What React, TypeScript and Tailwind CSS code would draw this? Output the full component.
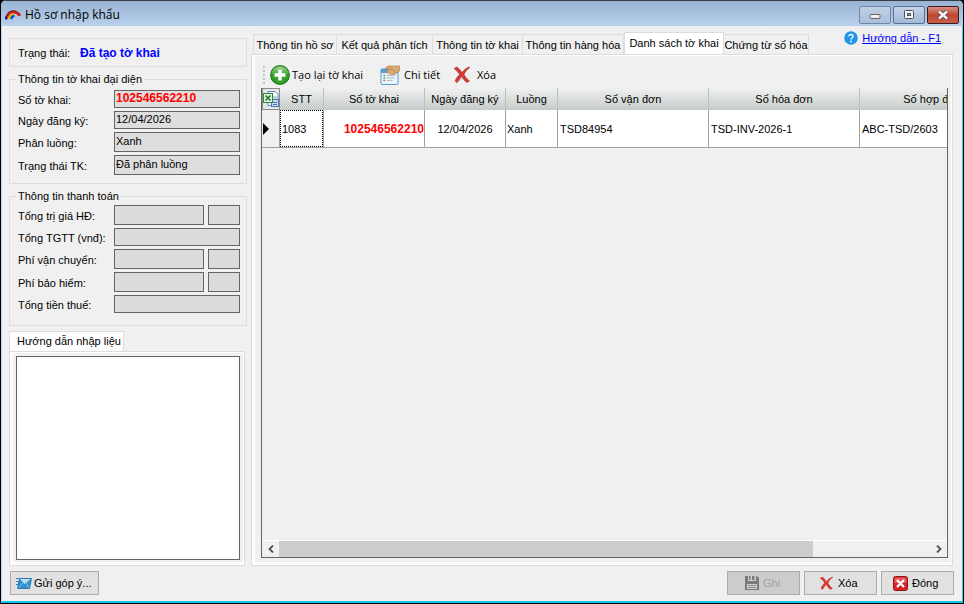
import React from "react";

const tabs = [
  { label: "Thông tin hồ sơ", width: "w-[84px]" },
  { label: "Kết quả phân tích", width: "w-[96px]" },
  { label: "Thông tin tờ khai", width: "w-[90px]" },
  { label: "Thông tin hàng hóa", width: "w-[101px]" },
  { label: "Danh sách tờ khai", width: "w-[100px]", active: true },
  { label: "Chứng từ số hóa", width: "w-[85px]" },
];

const columns = [
  { label: "STT", width: "w-[44px]" },
  { label: "Số tờ khai", width: "w-[101px]" },
  { label: "Ngày đăng ký", width: "w-[81px]" },
  { label: "Luồng", width: "w-[52px]" },
  { label: "Số vận đơn", width: "w-[151px]" },
  { label: "Số hóa đơn", width: "w-[151px]" },
  { label: "Số hợp đồng", width: "w-[151px]" },
];

const declarationFields = [
  { id: "number", label: "Số tờ khai:", value: "102546562210", size: "h-[18px]", style: "text-xs font-bold text-[#ff0000]" },
  { id: "date", label: "Ngày đăng ký:", value: "12/04/2026", size: "h-[18px]", style: "" },
  { id: "channel", label: "Phân luồng:", value: "Xanh", size: "h-5", style: "" },
  { id: "state", label: "Trạng thái TK:", value: "Đã phân luồng", size: "h-5", style: "" },
];

const paymentFields = [
  { id: "value", label: "Tổng trị giá HĐ:", size: "h-5", unit: true },
  { id: "taxable", label: "Tổng TGTT (vnđ):", size: "h-[18px]", unit: false },
  { id: "freight", label: "Phí vận chuyển:", size: "h-5", unit: true },
  { id: "insurance", label: "Phí bảo hiểm:", size: "h-5", unit: true },
  { id: "tax", label: "Tổng tiền thuế:", size: "h-[18px]", unit: false },
];

const LogoIcon = () => (
  <svg width="16" height="10" viewBox="0 0 16 10" fill="none" strokeWidth="1.500">
    <path d="M.8 8.500C2 4 5 1 8.500 1c3.500 0 5 2 7 4.500" stroke="#7a0f1e" />
    <path d="M2 9c1.500-4 4-6.500 7-6.500 2.500 0 4 1.500 5.500 3.500" stroke="#f01818" strokeWidth="2" />
    <path d="M3.700 9c.8-3 2.500-4.500 4.800-5.200" stroke="#ffd800" />
    <path d="M5.200 9c.6-2.500 1.800-3.800 3.800-4" stroke="#17a03a" />
    <path d="M6.500 9c.4-1.800 1.200-2.800 3-3" stroke="#1b2be0" />
    <path d="M1 6.500v3" stroke="#1520b0" strokeWidth="2" />
  </svg>
);

const CrossIcon = () => (
  <svg width="18" height="18" viewBox="0 0 18 18">
    <path d="M3 17.500l4-3 3-3 5 5" stroke="#c9c9c9" strokeWidth="1" fill="none" />
    <path
      d="M1 2.500L4 1c2 1.500 4 4 5 5.500C11 4 13 2 16 1l1 .5c-3 2-5 4.500-6 7 1.500 2.500 3 4.500 5.500 6.500L14 16.500c-2.500-1.500-4-4-5.500-6C7 12.500 6 14.500 4 16.500L2 15c1-2.500 2.500-4.500 4.500-6.500C5 6 3.500 4.500 1 2.500z"
      fill="#d23a33"
      stroke="#a8221c"
      strokeWidth=".5"
    />
  </svg>
);

const SmallCrossIcon = () => (
  <svg width="15" height="15" viewBox="0 0 18 18">
    <path
      d="M1 2.500L4 1c2 1.500 4 4 5 5.500C11 4 13 2 16 1l1 .5c-3 2-5 4.500-6 7 1.500 2.500 3 4.500 5.500 6.500L14 16.500c-2.500-1.500-4-4-5.500-6C7 12.500 6 14.500 4 16.500L2 15c1-2.500 2.500-4.500 4.500-6.500C5 6 3.500 4.500 1 2.500z"
      fill="#d23a33"
    />
  </svg>
);

const AddIcon = () => (
  <svg width="20" height="20" viewBox="0 0 20 20">
    <defs>
      <linearGradient id="add" x1="0" y1="0" x2="0" y2="1">
        <stop offset="0" stopColor="#a5dc98" />
        <stop offset=".5" stopColor="#35a12d" />
        <stop offset="1" stopColor="#2f9b28" />
      </linearGradient>
    </defs>
    <circle cx="10" cy="10" r="9.300" fill="url(#add)" stroke="#1f7a22" strokeWidth="1.200" />
    <path d="M8.200 4.500h3.600v3.700h3.700v3.600h-3.700v3.700H8.200v-3.700H4.500V8.200h3.700z" fill="#fff" />
  </svg>
);

const DetailIcon = () => (
  <svg width="20" height="20" viewBox="0 0 20 20">
    <rect x="1" y="4" width="17" height="15.500" rx="1" fill="#e9f3fa" stroke="#5a9fce" />
    <path d="M1 4h17v4H1z" fill="#4f9fd3" />
    <path d="M3.500 10.500h1.500M3.500 13h1.500" stroke="#35b34a" strokeWidth="1.500" />
    <path d="M3.500 15.500h1.500" stroke="#d65a4a" strokeWidth="1.500" />
    <path d="M6.500 10.500h8M6.500 13h8M6.500 15.500h6" stroke="#b4bec8" />
    <path
      d="M5 3.500L8 1h11.500v5l-3 1.500-2 2.500-1.500-1-1.500 1-1.500-1.500L7 8 6 6.500 9 4.500z"
      fill="#dba873"
      stroke="#a87a4c"
      strokeWidth=".6"
    />
    <path d="M9 4.500l3-.5 3.500 3.500" stroke="#a87a4c" strokeWidth=".7" fill="none" />
  </svg>
);

const ExcelIcon = () => (
  <svg width="16" height="16" viewBox="0 0 16 16">
    <path d="M5 .5h7l3 3v11H5z" fill="#fff" stroke="#5f83b8" />
    <path d="M9 6h5M9 8h5M9 10h5" stroke="#86a6d6" />
    <rect x="8.500" y="8.500" width="7" height="7" fill="#c6dcf5" stroke="#4a74b4" />
    <path d="M10 11.500h4M10 13.500h4" stroke="#4a74b4" />
    <rect x=".5" y="2.500" width="9" height="9" fill="#e4f3e0" stroke="#2b8a35" />
    <path d="M2.500 4.500l5 5M7.500 4.500l-5 5" stroke="#1f7f2b" strokeWidth="1.700" />
  </svg>
);

const MailIcon = () => (
  <svg width="16" height="11" viewBox="0 0 16 11">
    <path d="M3.500.5h12l-2 10h-12z" fill="#2f8fd0" stroke="#1c6ba5" strokeWidth=".8" />
    <path d="M4 1l4.500 5L15 1z" fill="#b9e0f7" />
    <path d="M2.500 10L7 5M12.500 10L10.500 5" stroke="#8cc9ee" strokeWidth=".9" />
    <path d="M0 .5h3M0 3.500h2.500M0 6.500h2" stroke="#2a86c5" />
  </svg>
);

const SaveIcon = () => (
  <svg width="14" height="14" viewBox="0 0 14 14">
    <path d="M0 0h12l2 2v12H0z" fill="#7b7b7b" />
    <path d="M3 0h8v5H3z" fill="#cfcfcf" />
    <path d="M7 0h2.500v4H7zM4 0h1.500v4H4z" fill="#7b7b7b" />
    <path d="M2 8h10v5H2z" fill="#cfcfcf" />
    <path d="M3 9.500h8M3 11.500h8" stroke="#8b8b8b" />
  </svg>
);

const CloseIcon = () => (
  <svg width="15" height="15" viewBox="0 0 15 15">
    <rect x=".5" y=".5" width="14" height="14" rx="2" fill="#d42227" stroke="#8d1417" />
    <path d="M1.500 7V2.500q0-1 1-1h10q1 0 1 1V7z" fill="#e65553" />
    <path d="M4 4l7 7M11 4l-7 7" stroke="#fff" strokeWidth="2.300" />
  </svg>
);

const HelpIcon = () => (
  <svg width="14" height="14" viewBox="0 0 14 14" fill="none">
    <circle cx="7" cy="7" r="6.800" fill="#2196e8" />
    <path d="M5 5.500c0-2.700 4-2.700 4 0C9 7 7 7 7 8.500" stroke="#fff" strokeWidth="1.300" />
    <circle cx="7" cy="10.500" r=".9" fill="#fff" />
  </svg>
);

const TitleBar = () => (
  <header className="flex h-[26px] shrink-0 items-center border-t border-[#3b3b45] bg-linear-to-b from-[#98b3d2] to-[#b9d1ec] pt-0.5 pr-1 pl-1">
    <LogoIcon />
    <h1 className="ml-1 font-['Open_Sans',sans-serif] text-xs">Hồ sơ nhập khẩu</h1>
    <div className="ml-auto flex gap-0.5">
      <button aria-label="Minimize" className="flex h-[18px] w-8 items-center justify-center rounded-xs border border-[#7287a5] bg-linear-to-b from-[#bfd0e4] to-[#a9c0da]">
        <svg width="12" height="12" viewBox="0 0 12 12">
          <rect x="1" y="5.500" width="10" height="4" rx="1" fill="#eee" stroke="#666" />
        </svg>
      </button>
      <button aria-label="Maximize" className="flex h-[18px] w-8 items-center justify-center rounded-xs border border-[#586f90] bg-linear-to-b from-[#c4d4e7] to-[#a0b9d6]">
        <svg width="12" height="12" viewBox="0 0 12 12">
          <rect x="1.500" y="1.500" width="9" height="8" rx="1" fill="#f5f5f5" stroke="#4a4f5a" />
          <rect x="4.500" y="4.500" width="3" height="2" fill="#9db4d0" stroke="#4a4f5a" />
        </svg>
      </button>
      <button aria-label="Close" className="flex h-[18px] w-8 items-center justify-center rounded-xs border border-[#43141b] bg-linear-to-b from-[#d98f82] via-[#bd4633] to-[#c8604a]">
        <svg width="12" height="12" viewBox="0 0 12 12">
          <path d="M2 2.500l8 7M10 2.500l-8 7" stroke="#55464d" strokeWidth="4" />
          <path d="M2 2.500l8 7M10 2.500l-8 7" stroke="#f7f7f7" strokeWidth="2.400" />
        </svg>
      </button>
    </div>
  </header>
);

const Sidebar = () => (
  <aside className="flex w-[238px] shrink-0 flex-col pt-3">
    <div className="flex h-[29px] shrink-0 items-center border border-[#dcdcdc] pl-2">
      <span className="w-[62px]">Trạng thái:</span>
      <strong className="text-xs text-[#0000ff]">Đã tạo tờ khai</strong>
    </div>

    <fieldset className="mt-1 min-w-0 border border-[#dcdcdc] pr-1.5 pb-2 pl-2">
      <legend className="-ml-0.5 px-0.5">Thông tin tờ khai đại diện</legend>
      <div className="flex flex-col gap-[3px] pt-[3px]">
        {declarationFields.map(({ id, label, value, size, style }) => (
          <div key={id} className="flex items-center">
            <label htmlFor={id} className="w-24 shrink-0 pt-0.5">
              {label}
            </label>
            <input
              id={id}
              readOnly
              defaultValue={value}
              className={`w-full min-w-0 border border-[#646464] bg-[#dedede] pb-0.5 pl-px ${size} ${style}`}
            />
          </div>
        ))}
      </div>
    </fieldset>

    <fieldset className="mt-1 min-w-0 border border-[#dcdcdc] pr-1.5 pb-3 pl-2">
      <legend className="-ml-0.5 px-0.5">Thông tin thanh toán</legend>
      <div className="flex flex-col gap-[3px] pt-px">
        {paymentFields.map(({ id, label, size, unit }) => (
          <div key={id} className="flex items-center">
            <label htmlFor={id} className="w-24 shrink-0 pt-0.5">
              {label}
            </label>
            <input id={id} readOnly className={`w-full min-w-0 border border-[#646464] bg-[#dcdcdc] ${size}`} />
            {unit && (
              <input
                aria-label={`${label} đơn vị`}
                readOnly
                className={`ml-1 w-8 shrink-0 border border-[#646464] bg-[#dcdcdc] ${size}`}
              />
            )}
          </div>
        ))}
      </div>
    </fieldset>

    <div className="mt-[5px] mr-0.5 flex min-h-0 flex-1 flex-col">
      <div className="h-5 w-[115px] border border-b-0 border-[#dcdcdc] bg-white pt-px pl-[7px]">
        <label htmlFor="guide">Hướng dẫn nhập liệu</label>
      </div>
      <div className="flex min-h-0 flex-1 border border-[#dcdcdc]">
        <div className="flex flex-1 border border-b-[3px] border-l-[3px] border-white px-[3px] pt-[3px] pb-0.5">
          <textarea id="guide" readOnly className="flex-1 resize-none border border-[#646464] bg-white" />
        </div>
      </div>
    </div>
  </aside>
);

const Toolbar = () => (
  <div className="flex h-[26px] shrink-0 items-center gap-3 pl-0.5 font-['Open_Sans',sans-serif]">
    <div className="flex items-center gap-1">
      <span className="h-[18px] w-[3px] border-l-2 border-dotted border-[#c4c4c4]" />
      <button className="flex items-center gap-0.5">
        <AddIcon />
        <span className="w-[76px] text-left">Tạo lại tờ khai</span>
      </button>
    </div>
    <button className="flex items-center gap-1">
      <DetailIcon />
      <span className="w-[37px] text-left">Chi tiết</span>
    </button>
    <button className="flex items-center gap-1.5">
      <CrossIcon />
      Xóa
    </button>
  </div>
);

const DeclarationTable = () => (
  <div className="flex min-h-0 flex-1 flex-col overflow-hidden border border-t-0 border-[#646464]">
    <div className="min-h-0 flex-1 overflow-hidden">
      <table className="w-[749px] table-fixed border-separate border-spacing-0">
        <thead>
          <tr className="h-[22px] bg-linear-to-b from-[#f0f2f1] to-[#c6cbc9]">
            <th className="w-[18px] border border-[#8a8a8a] bg-[#e8e8e8] p-0">
              <button aria-label="Xuất Excel" className="block">
                <ExcelIcon />
              </button>
            </th>
            {columns.map(({ label, width }) => (
              <th key={label} className={`border-r border-[#bcc0be] p-0 font-normal ${width}`}>
                {label}
              </th>
            ))}
          </tr>
        </thead>
        <tbody>
          <tr className="h-[38px] bg-white *:border-r *:border-b *:border-[#a0a0a0]">
            <td className="bg-[#f0f0f0] py-0 pr-0 pl-px">
              <svg width="6" height="12" viewBox="0 0 6 12">
                <path d="M0 0l6 6-6 6z" />
              </svg>
            </td>
            <td className="p-0">
              <div className="flex h-[37px] items-center border border-dotted border-black pl-px">1083</div>
            </td>
            <td className="p-0 text-right text-xs font-bold text-[#ff0000]">102546562210</td>
            <td className="p-0 text-center">12/04/2026</td>
            <td className="py-0 pr-0 pl-px">Xanh</td>
            <td className="py-0 pr-0 pl-0.5">TSD84954</td>
            <td className="py-0 pr-0 pl-0.5">TSD-INV-2026-1</td>
            <td className="py-0 pr-0 pl-0.5">ABC-TSD/2603</td>
          </tr>
        </tbody>
      </table>
    </div>
    <div className="flex h-[17px] shrink-0 border-t border-white">
      <button aria-label="Cuộn trái" className="flex w-[17px] items-center justify-center">
        <svg width="8" height="8" viewBox="0 0 8 8">
          <path d="M6 .5L2.500 4 6 7.500" fill="none" stroke="#505050" strokeWidth="1.800" />
        </svg>
      </button>
      <div className="flex-1">
        <div className="h-4 w-[82%] bg-[#cdcdcd]" />
      </div>
      <button aria-label="Cuộn phải" className="flex w-[17px] items-center justify-center">
        <svg width="8" height="8" viewBox="0 0 8 8">
          <path d="M2 .5L5.500 4 2 7.500" fill="none" stroke="#505050" strokeWidth="1.800" />
        </svg>
      </button>
    </div>
  </div>
);

const App = () => {
  return (
    <div className="h-screen bg-black">
      <div className="flex h-full flex-col overflow-hidden rounded-t-md border border-t-0 border-black bg-[#f0f0f0] font-['Liberation_Sans',sans-serif] text-[11px] leading-4 text-black">
        <TitleBar />
        <div className="flex min-h-0 flex-1 flex-col border-r border-b-2 border-l border-r-[#35d3f2] border-b-[#12c4ea] border-l-[#bcd5f2] pr-2 pb-1.5 pl-[7px]">
          <div className="flex min-h-0 flex-1 gap-1">
            <Sidebar />
            <main className="flex min-w-0 flex-1 flex-col pt-1 pr-px">
              <div className="flex h-6 shrink-0 items-end pl-0.5">
                <nav role="tablist" className="flex items-end">
                  {tabs.map(({ label, width, active }) => (
                    <button
                      key={label}
                      role="tab"
                      aria-selected={!!active}
                      className={
                        active
                          ? `h-[22px] border border-b-0 border-[#dcdcdc] bg-white pb-0.5 ${width}`
                          : `h-5 border-t border-r border-[#dcdcdc] whitespace-nowrap first:border-l ${width}`
                      }
                    >
                      {label}
                    </button>
                  ))}
                </nav>
                <div className="mr-3 ml-auto flex items-center gap-1 self-start">
                  <HelpIcon />
                  <a href="#help" className="leading-4 text-[#0000ff] underline">
                    Hướng dẫn - F1
                  </a>
                </div>
              </div>
              <div className="flex min-h-0 flex-1 border border-[#dcdcdc]">
                <div className="flex min-w-0 flex-1 flex-col border border-b-[3px] border-l-[3px] border-white pt-1.5 pr-[3px] pb-1 pl-1.5">
                  <Toolbar />
                  <DeclarationTable />
                </div>
              </div>
            </main>
          </div>

          <footer className="mt-[5px] flex h-6 shrink-0 items-center gap-1 pl-px *:flex *:h-6 *:items-center *:border *:border-[#adadad] *:bg-[#e1e1e1]">
            <button className="mr-auto w-[89px] gap-0.5 pl-[5px]">
              <MailIcon />
              Gửi góp ý...
            </button>
            <button disabled className="w-[73px] gap-1 bg-[#cccccc]! pl-[17px] text-[#a0a0a0]">
              <SaveIcon />
              Ghi
            </button>
            <button className="w-[73px] gap-1 pl-3.5">
              <SmallCrossIcon />
              Xóa
            </button>
            <button className="w-[73px] gap-1 pl-[11px]">
              <CloseIcon />
              Đóng
            </button>
          </footer>
        </div>
      </div>
    </div>
  );
};

export default App;
